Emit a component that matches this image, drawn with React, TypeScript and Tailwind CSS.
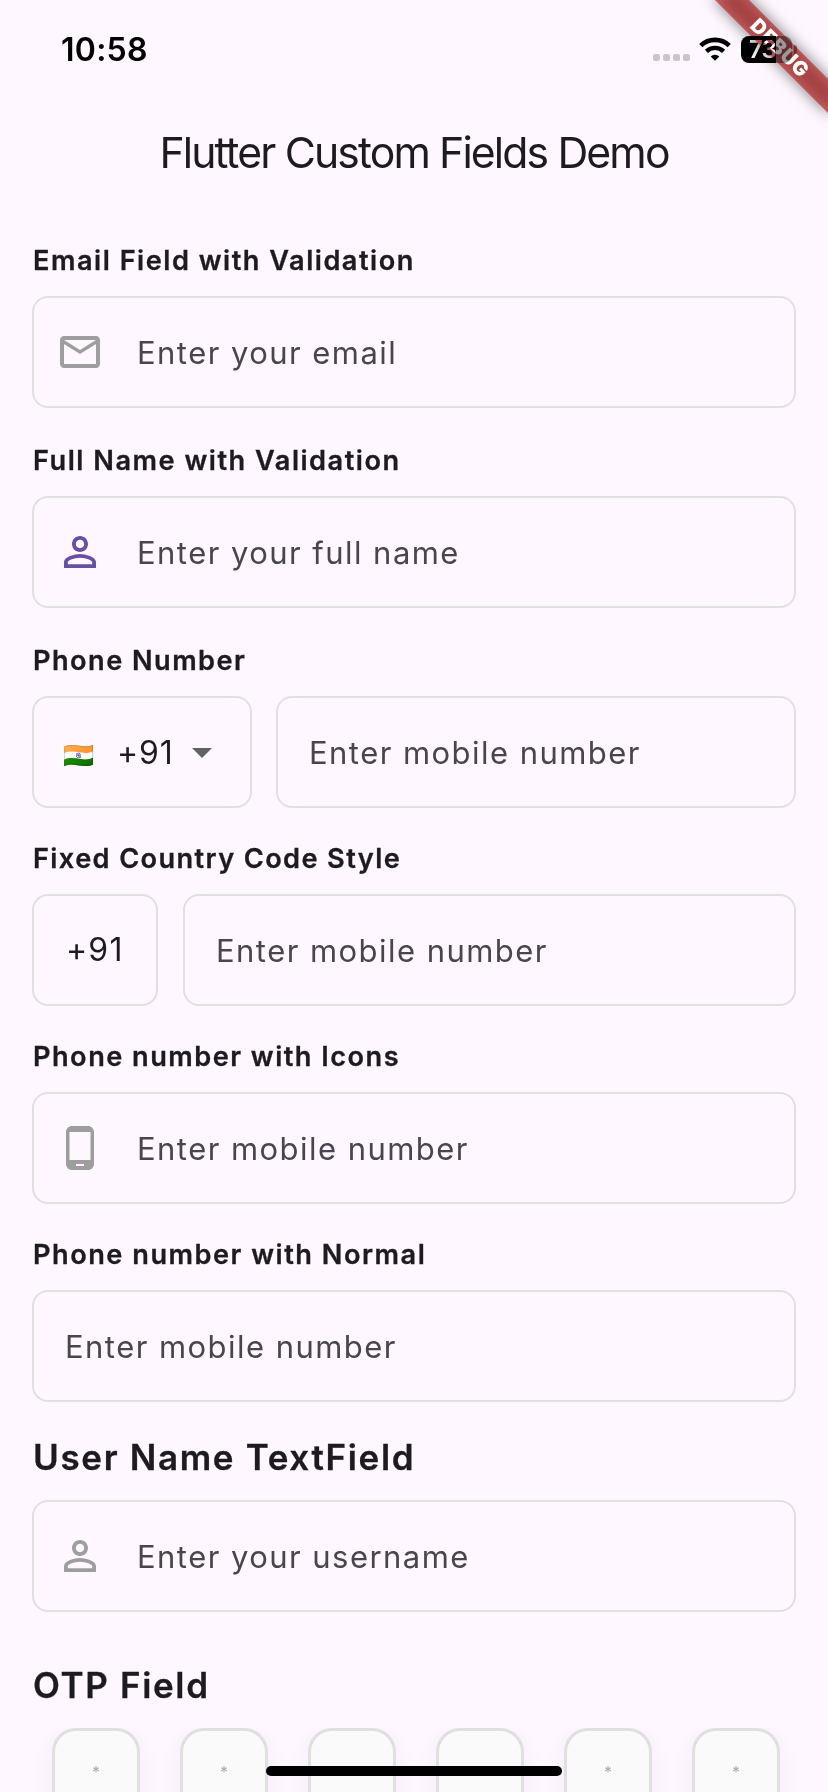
import type { ReactNode } from "react";

const ICONS = {
  mail: "M22 6c0-1.1-.9-2-2-2H4c-1.1 0-2 .9-2 2v12c0 1.1.9 2 2 2h16c1.1 0 2-.9 2-2V6zm-2 0l-8 5-8-5h16zm0 12H4V8l8 5 8-5v10z",
  person:
    "M12 5.9c1.16 0 2.1.94 2.1 2.1s-.94 2.1-2.1 2.1S9.9 9.16 9.9 8s.94-2.1 2.1-2.1m0 9c2.97 0 6.1 1.46 6.1 2.1v1.1H5.9V17c0-.64 3.13-2.1 6.1-2.1M12 4C9.79 4 8 5.79 8 8s1.79 4 4 4 4-1.79 4-4-1.79-4-4-4zm0 9c-2.67 0-8 1.34-8 4v3h16v-3c0-2.66-5.33-4-8-4z",
  phone:
    "M16 1H8C6.34 1 5 2.34 5 4v16c0 1.66 1.34 3 3 3h8c1.66 0 3-1.34 3-3V4c0-1.66-1.34-3-3-3zm-2 20h-4v-1h4v1zm3.25-3H6.75V4h10.5v14z",
  dropDown: "M7 10l5 5 5-5z",
};

function Icon({ name, className = "" }: { name: keyof typeof ICONS; className?: string }) {
  return (
    <svg viewBox="0 0 24 24" fill="currentColor" className={`size-12 shrink-0 ${className}`}>
      <path d={ICONS[name]} />
    </svg>
  );
}

function Label({ children, className = "tracking-[1.5px]" }: { children: ReactNode; className?: string }) {
  return (
    <h2
      className={`mb-[17px] pl-px text-[27.2px] leading-9 font-semibold [-webkit-text-stroke:0.3px_#1d1b20] ${className}`}
    >
      {children}
    </h2>
  );
}

function Heading({ children, className = "" }: { children: ReactNode; className?: string }) {
  return (
    <h2
      className={`mb-[21px] pl-px text-[35px] leading-[44px] font-semibold tracking-[1.66px] [-webkit-text-stroke:0.3px_#1d1b20] ${className}`}
    >
      {children}
    </h2>
  );
}

function Field({ children, className = "" }: { children: ReactNode; className?: string }) {
  return (
    <div className={`flex h-28 items-center rounded-2xl border-2 border-[#e0e0e0] ${className}`}>{children}</div>
  );
}

function Hint({ children, className = "" }: { children: ReactNode; className?: string }) {
  return (
    <span
      className={`pt-[2px] text-[31px] leading-10 font-normal tracking-[1.45px] whitespace-nowrap text-[#49454f] ${className}`}
    >
      {children}
    </span>
  );
}

function StatusBar() {
  return (
    <div className="flex h-[98px] items-start justify-between pl-[61px]">
      <span className="mt-[30px] text-[32px] leading-10 font-semibold tracking-[0.25px] text-black">10:58</span>
      <div className="flex">
        <div className="mt-[54px] flex gap-[3px]">
          {[0, 1, 2, 3].map((i) => (
            <span key={i} className="size-[7px] rounded-[2px] bg-[#cac5cb]" />
          ))}
        </div>
        <svg viewBox="0 0 32 24" className="mt-[37px] ml-[9px] h-6 w-8" fill="none">
          <path d="M1.8 8.6a20.4 20.4 0 0 1 28.4 0" stroke="#000" strokeWidth="4.6" />
          <path d="M7.4 14.3a12.4 12.4 0 0 1 17.2 0" stroke="#000" strokeWidth="4.4" />
          <path d="M16 23.8l-4.3-4.4a6.2 6.2 0 0 1 8.6 0z" fill="#000" />
        </svg>
        <div className="relative z-20 mt-9 mr-[31px] ml-[10px] flex items-center gap-[2px] mix-blend-multiply">
          <div className="flex h-[27px] w-[51px] items-center rounded-[8px] bg-[linear-gradient(90deg,#000_35px,#999_35px)] pl-[8px] text-[24px] leading-[27px] font-semibold tracking-[-1px] text-white">
            73
          </div>
          <span className="h-[9px] w-[3px] rounded-r-[3px] bg-[#999]" />
        </div>
      </div>
    </div>
  );
}

function DebugBanner() {
  return (
    <div className="absolute top-0 right-0 z-10 size-[200px] overflow-hidden">
      <div className="absolute top-[36px] right-[-32px] h-6 w-40 rotate-45">
        <div className="absolute inset-0 bg-black/50 blur-[7.5px]" />
        <div className="relative flex h-6 items-center justify-center bg-[#b71c1c]/63 text-[20px] leading-6 font-black tracking-[0.8px] text-white">
          DEBUG
        </div>
      </div>
    </div>
  );
}

export default function App() {
  return (
    <div className="relative isolate h-[1792px] w-[828px] overflow-hidden bg-[#fef7ff] font-[Inter,'Liberation_Sans',sans-serif] text-[#1d1b20]">
      <StatusBar />
      <DebugBanner />
      <h1 className="mt-[29px] text-center text-[42.7px] leading-[52px] font-normal tracking-[-1.87px]">
        Flutter Custom Fields Demo
      </h1>

      <main className="px-8 pt-16">
        <Label>Email Field with Validation</Label>
        <Field className="pl-[22px]">
          <Icon name="mail" className="text-[#9e9e9e]" />
          <Hint className="ml-[33px]">Enter your email</Hint>
        </Field>

        <Label className="mt-[35px] tracking-[1.5px]">Full Name with Validation</Label>
        <Field className="pl-[22px]">
          <Icon name="person" className="text-[#6750a4]" />
          <Hint className="ml-[33px]">Enter your full name</Hint>
        </Field>

        <Label className="mt-[35px] tracking-[1.45px]">Phone Number</Label>
        <div className="flex gap-6">
          <Field className="w-[220px] shrink-0 pl-[29px]">
            <span className="w-[54px] pt-[5px] text-[25px] leading-8">🇮🇳</span>
            <span className="w-[61px] pt-[2px] text-[32px] leading-10 tracking-[0.9px]">+91</span>
            <Icon name="dropDown" className="text-[#616161]" />
          </Field>
          <Field className="flex-1 pl-[31px]">
            <Hint>Enter mobile number</Hint>
          </Field>
        </div>

        <Label className="mt-[33px] tracking-[1.38px]">Fixed Country Code Style</Label>
        <div className="flex gap-[25px]">
          <Field className="w-[126px] shrink-0 pl-[32px]">
            <span className="text-[32px] leading-10 tracking-[1.2px]">+91</span>
          </Field>
          <Field className="flex-1 pl-[31px]">
            <Hint>Enter mobile number</Hint>
          </Field>
        </div>

        <Label className="mt-[33px] tracking-[1.47px]">Phone number with Icons</Label>
        <Field className="pl-[22px]">
          <Icon name="phone" className="text-[#9e9e9e]" />
          <Hint className="ml-[33px]">Enter mobile number</Hint>
        </Field>

        <Label className="mt-[33px] tracking-[1.5px]">Phone number with Normal</Label>
        <Field className="pl-[31px]">
          <Hint>Enter mobile number</Hint>
        </Field>

        <Heading className="mt-[33px]">User Name TextField</Heading>
        <Field className="pl-[22px]">
          <Icon name="person" className="text-[#9e9e9e]" />
          <Hint className="ml-[33px]">Enter your username</Hint>
        </Field>

        <Heading className="mt-[51px]">OTP Field</Heading>
        <div className="flex h-16 gap-10 overflow-hidden pl-5">
          {[0, 1, 2, 3, 4, 5].map((i) => (
            <div
              key={i}
              className="flex h-28 w-[88px] shrink-0 justify-center rounded-3xl border-[3px] border-[#e0e0e0] bg-[#fafafa] pt-[31px] text-[16px] leading-5 text-[#a8a8a8] shadow-[0_8px_20px_rgba(103,58,133,0.07)]"
            >
              *
            </div>
          ))}
        </div>
      </main>

      <div className="absolute bottom-4 left-[266px] h-[10px] w-[296px] rounded-full bg-black" />
    </div>
  );
}
